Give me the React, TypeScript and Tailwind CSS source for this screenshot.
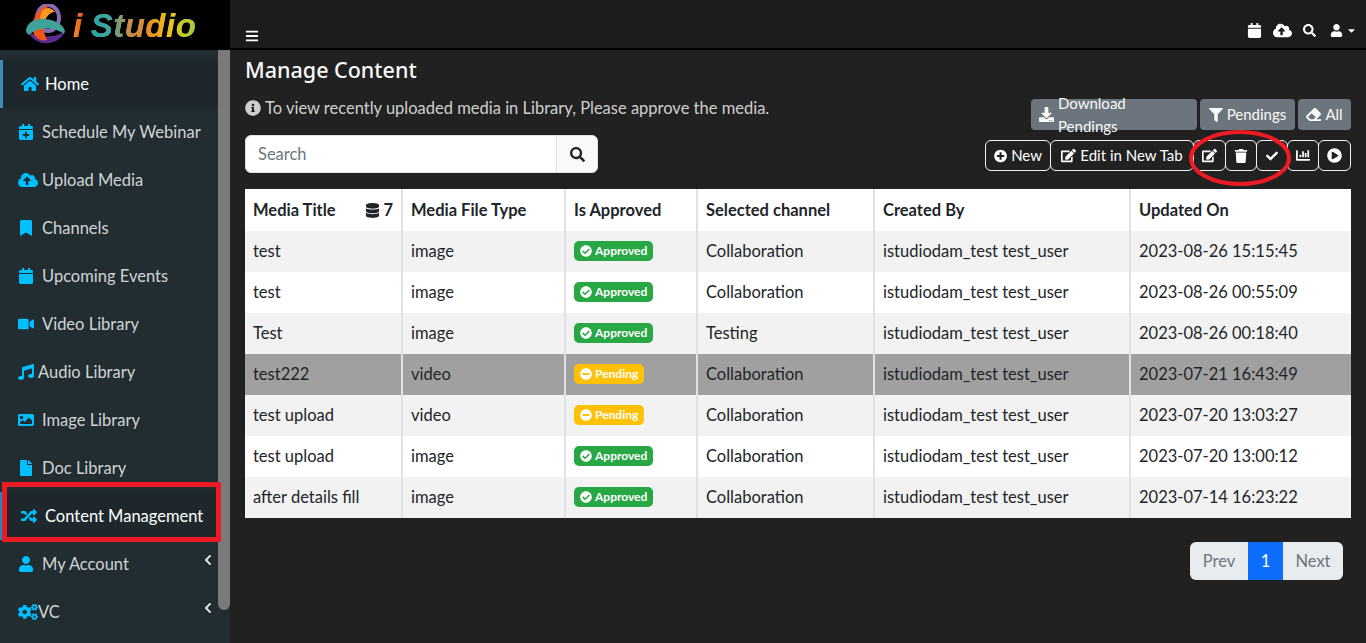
import React from "react";
import {
  FaHome, FaCalendarPlus, FaCloudUploadAlt, FaBookmark, FaCalendar, FaVideo, FaMusic, FaImage, FaFile, FaRandom, FaUser, FaCogs,
  FaChevronLeft, FaBars, FaSearch, FaCaretDown, FaInfoCircle, FaDownload, FaFilter, FaEraser, FaPlusCircle, FaEdit, FaTrash, FaCheck, FaChartBar, FaPlayCircle, FaDatabase, FaCheckCircle, FaMinusCircle,
} from "react-icons/fa";

const nav = [
  { icon: FaHome, label: "Home", active: true, w: "w-[24px]", s: 18 },
  { icon: FaCalendarPlus, label: "Schedule My Webinar", s: 16 },
  { icon: FaCloudUploadAlt, label: "Upload Media", s: 20 },
  { icon: FaBookmark, label: "Channels", s: 16 },
  { icon: FaCalendar, label: "Upcoming Events", s: 16 },
  { icon: FaVideo, label: "Video Library", s: 16 },
  { icon: FaMusic, label: "Audio Library", s: 16, narrow: true },
  { icon: FaImage, label: "Image Library", s: 16 },
  { icon: FaFile, label: "Doc Library", s: 16 },
  { icon: FaRandom, label: "Content Management", s: 16, current: true },
  { icon: FaUser, label: "My Account", s: 16, chev: true },
  { icon: FaCogs, label: "VC", s: 20, chev: true, narrow: true },
];

const rows = [
  ["test", "image", 1, "Collaboration", "2023-08-26 15:15:45"],
  ["test", "image", 1, "Collaboration", "2023-08-26 00:55:09"],
  ["Test", "image", 1, "Testing", "2023-08-26 00:18:40"],
  ["test222", "video", 0, "Collaboration", "2023-07-21 16:43:49"],
  ["test upload", "video", 0, "Collaboration", "2023-07-20 13:03:27"],
  ["test upload", "image", 1, "Collaboration", "2023-07-20 13:00:12"],
  ["after details fill", "image", 1, "Collaboration", "2023-07-14 16:23:22"],
] as const;

const grayBtn = "h-[31px] px-2 rounded-[4px] bg-[#6c757d] text-[#f8f9fa] text-[15px] flex items-center gap-1";
const outBtn = "h-[31px] px-2 rounded-[6px] border border-[#f2f2f2] text-white text-[15px] flex items-center justify-center gap-1 -ml-px";

function Logo() {
  return (
    <div className="h-[50px] bg-black flex items-center pl-[25px] gap-[6px]">
      <svg width="42" height="42" viewBox="0 0 42 42" className="shrink-0">
        <ellipse cx="23" cy="14" rx="11" ry="13" fill="none" stroke="#8a6bb5" strokeWidth="4" />
        <path d="M4 28 C6 36 18 42 28 38 C34 36 38 32 40 27 C32 34 14 34 4 28Z" fill="#5c2d91" />
        <path d="M12 34 C2 24 10 4 24 1 C18 8 16 24 22 36 C18 37 15 36 12 34Z" fill="#f2541b" />
        <path d="M18 6 C14 12 14 20 16 26 C20 14 24 8 30 8 C26 3 22 3 18 6Z" fill="#f59a23" />
        <path d="M1 26 C3 18 10 14 20 15 C30 16 38 20 40 27 L39 30 C32 24 14 21 4 31 C2 30 1 28 1 26Z" fill="#3fa39c" />
      </svg>
      <span className="font-['Liberation_Sans',sans-serif] font-bold italic text-[33px] leading-none tracking-[0.5px] bg-gradient-to-r from-[#f26a1b] via-[#27a9a5] to-[#9ccb3b] bg-clip-text text-transparent pr-1">
        <span className="bg-gradient-to-r from-[#f7931e] to-[#e8501a] bg-clip-text text-transparent mr-[8px]">i</span>
        <span className="bg-[linear-gradient(90deg,#1fa8a8_0%,#3aa9a0_18%,#c98a4a_36%,#f08a1d_55%,#f2c315_75%,#9ccb3b_100%)] bg-clip-text text-transparent">Studio</span>
      </span>
    </div>
  );
}

function Badge({ ok }: { ok: boolean }) {
  return (
    <span className={`inline-flex items-center h-[20px] px-[6px] gap-[3px] rounded-[5px] text-white text-[12px] font-bold ${ok ? "bg-[#28a745]" : "bg-[#ffc107]"}`}>
      {ok ? <FaCheckCircle size={12} /> : <FaMinusCircle size={12} />}
      {ok ? "Approved" : "Pending"}
    </span>
  );
}

export default function App() {
  return (
    <div className="w-[1366px] h-[643px] overflow-hidden flex bg-[#212121] font-['Lato','Noto_Sans',sans-serif] relative">
      <aside className="w-[230px] shrink-0 flex flex-col">
        <Logo />
        <div className="flex-1 flex min-h-0">
          <nav className="w-[218px] bg-[#222d32] pt-[10px] overflow-hidden">
            {nav.map((n) => (
              <div
                key={n.label}
                className={`relative h-[48px] flex items-center pl-[18px] text-[16.5px] ${n.active ? "bg-[#1e282c] border-l-[3px] border-[#3c8dbc] pl-[15px] text-white" : n.current ? "bg-[#1e282c] border-l-[3px] border-[#1e88c9] pl-[15px] text-white" : "text-[#d0d4d6]"}`}
              >
                <span className={`text-[#00bfff] flex items-center justify-start shrink-0 ${n.narrow ? "w-[20px]" : "w-[24px]"}`}>
                  <n.icon size={n.s} />
                </span>
                <span className="whitespace-nowrap">{n.label}</span>
                {n.chev && <FaChevronLeft size={12} className="absolute right-[4px] top-[14px] text-[#e5e5e5]" />}
              </div>
            ))}
          </nav>
          <div className="w-[12px] bg-[#222d32] flex flex-col">
            <div className="h-[560px] rounded-b-[6px] bg-[#7a7a7a]" />
          </div>
        </div>
      </aside>

      <main className="flex-1 min-w-0 flex flex-col">
        <header className="h-[50px] shrink-0 bg-[#1c1c1c] border-b-[2px] border-black flex items-end justify-between pl-[15px] pr-[9px] pb-[5px] text-white">
          <FaBars size={14} className="mb-0" />
          <div className="flex items-center gap-[11px] pb-[3px]">
            <FaCalendar size={15} />
            <FaCloudUploadAlt size={19} />
            <FaSearch size={13} />
            <div className="flex items-center gap-[3px] ml-[3px]">
              <FaUser size={13} />
              <FaCaretDown size={11} />
            </div>
          </div>
        </header>

        <div className="flex-1 pl-[15px] pr-[15px] flex flex-col">
          <h1 className="font-['Noto_Sans',sans-serif] text-[21.5px] leading-[30px] mt-[5px] text-[#f8f9fa] font-medium">Manage Content</h1>

          <div className="flex justify-between items-start mt-[11px]">
            <div className="flex flex-col">
              <p className="flex items-center gap-[4px] text-[#cfcfcf] text-[16.5px] h-[24px]">
                <FaInfoCircle size={16} />
                To view recently uploaded media in Library, Please approve the media.
              </p>
              <div className="mt-[15px] w-[353px] h-[38px] flex rounded-[6px] overflow-hidden bg-white border border-[#dee2e6]">
                <div className="flex-1 pl-[12px] flex items-center text-[#6c757d] text-[16.5px]">Search</div>
                <div className="w-[41px] bg-[#f8f9fa] border-l border-[#dee2e6] flex items-center justify-center text-[#212529]">
                  <FaSearch size={15} />
                </div>
              </div>
            </div>
            <div className="flex flex-col items-end">
              <div className="flex gap-[3px] mt-[3px]">
                <div className={`${grayBtn} w-[166px] justify-center`}><FaDownload size={15} />Download Pendings</div>
                <div className={`${grayBtn} w-[95px] justify-center`}><FaFilter size={14} />Pendings</div>
                <div className={`${grayBtn} w-[53px] justify-center`}><FaEraser size={15} />All</div>
              </div>
              <div className="flex mt-[10px]">
                <div className={`${outBtn} w-[66px]`}><FaPlusCircle size={14} />New</div>
                <div className={`${outBtn} w-[144px]`}><FaEdit size={15} />Edit in New Tab</div>
                <div className={`${outBtn} w-[33px] px-0`}><FaEdit size={15} /></div>
                <div className={`${outBtn} w-[32px] px-0`}><FaTrash size={14} /></div>
                <div className={`${outBtn} w-[32px] px-0`}><FaCheck size={12} /></div>
                <div className={`${outBtn} w-[32px] px-0`}><FaChartBar size={15} /></div>
                <div className={`${outBtn} w-[33px] px-0`}><FaPlayCircle size={15} /></div>
              </div>
            </div>
          </div>

          <table className="mt-[16px] w-[1106px] table-fixed border-collapse text-[16.5px] text-[#212529]">
            <colgroup>
              <col className="w-[157px]" />
              <col className="w-[163px]" />
              <col className="w-[132px]" />
              <col className="w-[177px]" />
              <col className="w-[256px]" />
              <col className="w-[221px]" />
            </colgroup>
            <thead>
              <tr className="bg-white h-[42px] font-semibold">
                <th className="text-left font-bold px-[8px] border-r-2 border-[#dee2e6]">
                  <div className="flex justify-between items-center">
                    <span>Media Title</span>
                    <span className="flex items-center gap-[3px]"><FaDatabase size={15} />7</span>
                  </div>
                </th>
                {["Media File Type", "Is Approved", "Selected channel", "Created By", "Updated On"].map((h) => (
                  <th key={h} className="text-left font-bold px-[8px] border-r-2 border-[#dee2e6] last:border-r-0">{h}</th>
                ))}
              </tr>
            </thead>
            <tbody>
              {rows.map((r, i) => (
                <tr key={i} className={`h-[41px] ${i === 3 ? "bg-[#a0a0a0]" : i % 2 === 0 ? "bg-[#f2f2f2]" : "bg-white"}`}>
                  <td className="px-[8px] border-r-2 border-[#dee2e6]">{r[0]}</td>
                  <td className="px-[8px] border-r-2 border-[#dee2e6]">{r[1]}</td>
                  <td className="px-[8px] border-r-2 border-[#dee2e6]"><Badge ok={r[2] === 1} /></td>
                  <td className="px-[8px] border-r-2 border-[#dee2e6]">{r[3]}</td>
                  <td className="px-[8px] border-r-2 border-[#dee2e6]">istudiodam_test test_user</td>
                  <td className="px-[8px]">{r[4]}</td>
                </tr>
              ))}
            </tbody>
          </table>

          <div className="flex justify-end mt-[24px] pr-[8px]">
            <div className="flex h-[38px] rounded-[6px] overflow-hidden text-[16.5px]">
              <div className="w-[58px] bg-[#e9ecef] text-[#6c757d] flex items-center justify-center">Prev</div>
              <div className="w-[35px] bg-[#0d6efd] text-white flex items-center justify-center">1</div>
              <div className="w-[60px] bg-[#e9ecef] text-[#6c757d] flex items-center justify-center">Next</div>
            </div>
          </div>
        </div>
      </main>

      {/* hand-drawn annotations over the screenshot */}
      <div className="absolute left-[2px] top-[482px] w-[219px] h-[60px] border-[5px] border-[#ed1c24]" />
      <svg className="absolute left-[1185px] top-[125px]" width="110" height="66" viewBox="0 0 110 66">
        <ellipse cx="55" cy="33" rx="49" ry="26" fill="none" stroke="#ed1c24" strokeWidth="4" />
      </svg>
    </div>
  );
}
